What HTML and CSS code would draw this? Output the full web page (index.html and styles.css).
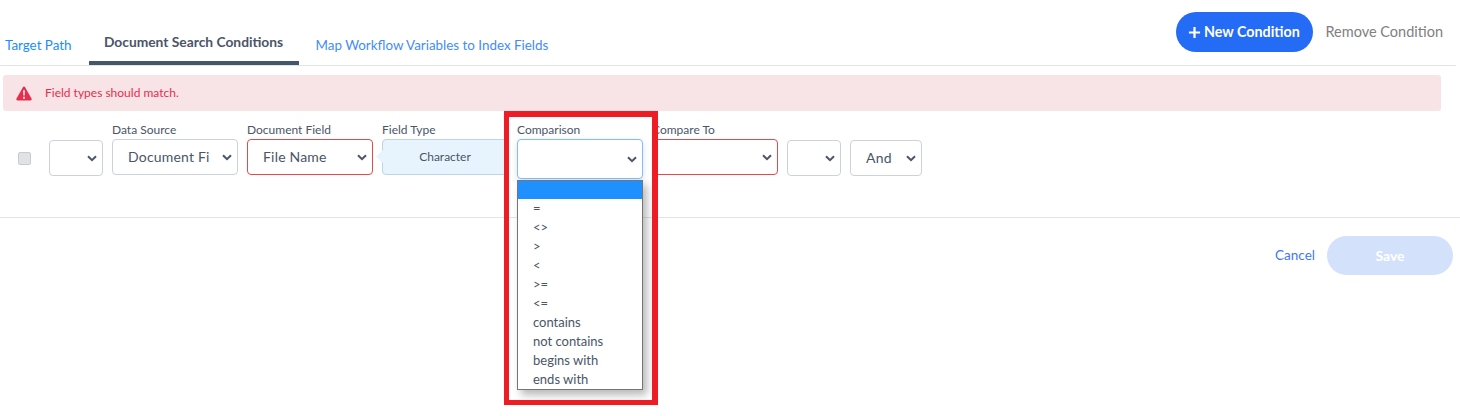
FILE: index.html
```html
<!DOCTYPE html>
<html lang="en">
<head>
<meta charset="utf-8">
<title>Document Search Conditions</title>
<link rel="stylesheet" href="styles.css">
</head>
<body>
<div class="page">
  <header class="topbar">
    <nav class="tabs">
      <a class="tab tab-first">Target Path</a>
      <a class="tab tab-active">Document Search Conditions</a>
      <a class="tab tab-last">Map Workflow Variables to Index Fields</a>
    </nav>
    <div class="actions">
      <button class="btn-primary"><svg class="plus" viewBox="0 0 14 14"><path d="M7 1v12M1 7h12"/></svg>New Condition</button>
      <span class="remove">Remove Condition</span>
    </div>
  </header>

  <div class="alert">
    <svg class="alert-icon" viewBox="0 0 16 15"><path d="M8 .6c.5 0 .9.3 1.2.8l6.3 11c.5 1-.1 2-1.2 2H1.7c-1.1 0-1.7-1-1.2-2l6.3-11C7.1.9 7.500.6 8 .6z" fill="#e62e4d"/><path d="M7 4.200h2l-.3 5.300H7.300zM7 10.700h2v2H7z" fill="#f8e2e5"/></svg>
    <span>Field types should match.</span>
  </div>

  <section class="condition">
    <span class="checkbox"></span>
    <div class="select select-small offset"><svg class="chev" viewBox="0 0 10 7"><path d="M1 1.200l4 4 4-4"/></svg></div>
    <div class="field">
      <label>Data Source</label>
      <div class="select"><span class="val">Document Fi</span><svg class="chev" viewBox="0 0 10 7"><path d="M1 1.200l4 4 4-4"/></svg></div>
    </div>
    <div class="field">
      <label>Document Field</label>
      <div class="select invalid"><span class="val">File Name</span><svg class="chev" viewBox="0 0 10 7"><path d="M1 1.200l4 4 4-4"/></svg></div>
    </div>
    <div class="field">
      <label>Field Type</label>
      <div class="type-box">Character</div>
    </div>
    <div class="field field-open">
      <label>Comparison</label>
      <div class="select focused"><svg class="chev" viewBox="0 0 10 7"><path d="M1 1.200l4 4 4-4"/></svg></div>
      <ul class="dropdown">
        <li class="selected">&nbsp;</li>
        <li>=</li>
        <li>&lt;&gt;</li>
        <li>&gt;</li>
        <li>&lt;</li>
        <li>&gt;=</li>
        <li>&lt;=</li>
        <li>contains</li>
        <li>not contains</li>
        <li>begins with</li>
        <li>ends with</li>
      </ul>
    </div>
    <div class="field">
      <label>Compare To</label>
      <div class="select invalid"><svg class="chev" viewBox="0 0 10 7"><path d="M1 1.200l4 4 4-4"/></svg></div>
    </div>
    <div class="select select-small offset"><svg class="chev" viewBox="0 0 10 7"><path d="M1 1.200l4 4 4-4"/></svg></div>
    <div class="select select-and offset"><span class="val">And</span><svg class="chev" viewBox="0 0 10 7"><path d="M1 1.200l4 4 4-4"/></svg></div>
  </section>

  <footer class="footer">
    <a class="cancel">Cancel</a>
    <button class="btn-save">Save</button>
  </footer>
</div>
<div class="highlight"></div>
</body>
</html>
```
FILE: styles.css
```css
* { box-sizing: border-box; }
html, body { margin: 0; padding: 0; background: #fff; }
body {
  font-family: "Lato", "Noto Sans", sans-serif;
  font-size: 13px;
  color: #4a5568;
  height: 416px;
  overflow: hidden;
  position: relative;
}
.page { width: 1460px; }

.topbar {
  width: 1456px;
  height: 66px;
  border-bottom: 1px solid #e2e3e5;
  display: flex;
  justify-content: space-between;
}
.tabs { display: flex; align-items: flex-end; }
.tab { color: #1a8cff; font-size: 13.400px; display: block; white-space: nowrap; }
.tab-first { padding: 0 17px 5px 5px; line-height: 30px; }
.tab-active {
  color: #4a5568;
  font-size: 13.800px;
  font-weight: 700;
  width: 210px;
  text-align: center;
  border-bottom: 4px solid #44566c;
  line-height: 30px;
  padding-bottom: 4px;
}
.tab-last { padding: 0 0 5px 17px; line-height: 30px; color: #3f8cfb; }
.actions { display: flex; align-items: flex-start; padding-top: 12px; }
.btn-primary {
  width: 137px;
  height: 40px;
  border: 0;
  border-radius: 20px;
  background: #246bf5;
  color: #fff;
  font: 700 14.300px "Lato", sans-serif;
  display: flex;
  align-items: center;
  justify-content: center;
  gap: 3px;
  padding: 0 2px 2px 0;
}
.plus { width: 13px; height: 13px; fill: none; stroke: #fff; stroke-width: 2.400; margin-top: 2px; }
.remove { color: #808080; font-size: 14.500px; line-height: 39px; margin: 0 13px 0 12px; white-space: nowrap; }

.alert {
  margin: 9px 0 0 3px;
  width: 1438px;
  height: 36px;
  background: #f8e3e6;
  border-radius: 3px;
  color: #e62e4d;
  font-size: 12px;
  display: flex;
  align-items: center;
  padding: 0 0 0 13px;
  gap: 13px;
}
.alert span { margin-top: -2px; }
.alert-icon { width: 16px; height: 15px; }

.condition {
  display: flex;
  align-items: flex-start;
  gap: 9px;
  height: 96px;
  margin-top: 11px;
  padding-left: 18px;
  border-bottom: 1px solid #dfe3ea;
}
.checkbox {
  width: 13px;
  height: 13px;
  margin: 30px 9px 0 0;
  background: #e0e2e5;
  border: 1px solid #c8ccd2;
  border-radius: 2px;
  flex: none;
}
.field { width: 126px; flex: none; position: relative; }
.field label { display: block; font-size: 12px; line-height: 15px; height: 17px; color: #4a5568; }
.select {
  height: 36px;
  width: 126px;
  border: 1px solid #cbd2da;
  border-radius: 4px;
  background: #fff;
  display: flex;
  align-items: center;
  padding: 0 5px 2px 15px;
  position: relative;
  flex: none;
  font-size: 14px;
}
.val { letter-spacing: .2px; white-space: nowrap; }
.select .chev {
  width: 10px;
  height: 7px;
  position: absolute;
  right: 5px;
  top: 14px;
  fill: none;
  stroke: #4a5568;
  stroke-width: 2;
}
.offset { margin-top: 18px; }
.select-small { width: 54px; }
.select-and { width: 72px; }
.invalid { border-color: #e5484d; }
.focused {
  height: 40px;
  border-color: #80bdff;
  box-shadow: 0 2px 6px rgba(0, 0, 0, .12);
}
.focused .chev { top: 16px; }
.type-box {
  height: 36px;
  background: #e8f4fd;
  border: 1px solid #bcd3ea;
  border-radius: 4px;
  display: flex;
  align-items: center;
  justify-content: center;
  font-size: 12px;
  padding-bottom: 2px;
  position: relative;
}
.type-box::before {
  content: "";
  position: absolute;
  left: -5px;
  top: 12px;
  width: 9px;
  height: 9px;
  background: #e8f4fd;
  transform: rotate(45deg);
}
.dropdown {
  position: absolute;
  left: 0;
  top: 58px;
  width: 126px;
  margin: 0;
  padding: 0;
  list-style: none;
  background: #fff;
  border: 1px solid #767676;
  box-shadow: 4px 5px 8px rgba(0, 0, 0, .28);
  z-index: 5;
}
.dropdown li { height: 19px; line-height: 18px; padding-left: 15px; font-size: 13px; }
.dropdown .selected { background: #1e90ff; height: 18px; }

.footer {
  display: flex;
  justify-content: flex-end;
  align-items: center;
  gap: 12px;
  padding: 18px 7px 0 0;
}
.cancel { color: #3f76f6; font-size: 13.500px; margin-top: -1px; }
.btn-save {
  width: 126px;
  height: 39px;
  border: 0;
  border-radius: 20px;
  background: #d3e1fb;
  color: #fff;
  font: 700 14px "Lato", sans-serif;
  padding: 0;
}

.highlight {
  position: absolute;
  left: 504px;
  top: 111px;
  width: 154px;
  height: 294px;
  border: solid #ee1c25;
  border-width: 6px 6px 5px 5px;
  z-index: 10;
}
```
